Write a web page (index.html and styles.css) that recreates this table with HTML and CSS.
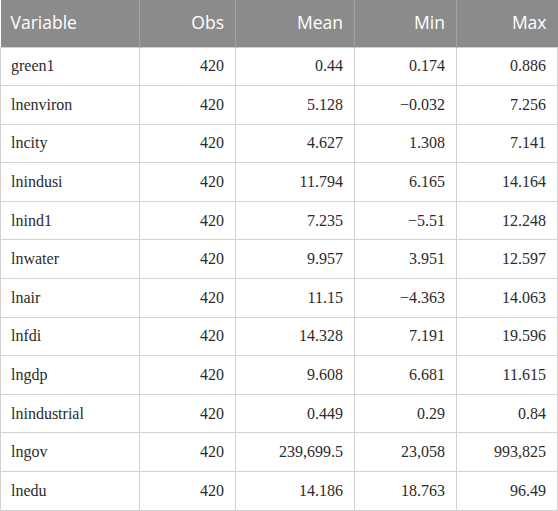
FILE: index.html
```html
<!DOCTYPE html>
<html>
<head>
<meta charset="utf-8">
<link rel="stylesheet" href="styles.css">
</head>
<body>
<table class="stats">
  <colgroup>
    <col class="c1"><col class="c2"><col class="c3"><col class="c4"><col class="c5">
  </colgroup>
  <thead>
    <tr><th class="left">Variable</th><th>Obs</th><th>Mean</th><th>Min</th><th>Max</th></tr>
  </thead>
  <tbody>
    <tr><td class="left">green1</td><td>420</td><td>0.44</td><td>0.174</td><td>0.886</td></tr>
    <tr><td class="left">lnenviron</td><td>420</td><td>5.128</td><td>−0.032</td><td>7.256</td></tr>
    <tr><td class="left">lncity</td><td>420</td><td>4.627</td><td>1.308</td><td>7.141</td></tr>
    <tr><td class="left">lnindusi</td><td>420</td><td>11.794</td><td>6.165</td><td>14.164</td></tr>
    <tr><td class="left">lnind1</td><td>420</td><td>7.235</td><td>−5.51</td><td>12.248</td></tr>
    <tr><td class="left">lnwater</td><td>420</td><td>9.957</td><td>3.951</td><td>12.597</td></tr>
    <tr><td class="left">lnair</td><td>420</td><td>11.15</td><td>−4.363</td><td>14.063</td></tr>
    <tr><td class="left">lnfdi</td><td>420</td><td>14.328</td><td>7.191</td><td>19.596</td></tr>
    <tr><td class="left">lngdp</td><td>420</td><td>9.608</td><td>6.681</td><td>11.615</td></tr>
    <tr><td class="left">lnindustrial</td><td>420</td><td>0.449</td><td>0.29</td><td>0.84</td></tr>
    <tr><td class="left">lngov</td><td>420</td><td>239,699.5</td><td>23,058</td><td>993,825</td></tr>
    <tr><td class="left">lnedu</td><td>420</td><td>14.186</td><td>18.763</td><td>96.49</td></tr>
  </tbody>
</table>
</body>
</html>
```
FILE: styles.css
```css
html, body {
  margin: 0;
  padding: 0;
  background: #ffffff;
}
.stats {
  border-collapse: collapse;
  table-layout: fixed;
  width: 557px;
}
.c1 { width: 139px; }
.c2 { width: 96px; }
.c3 { width: 119px; }
.c4 { width: 102px; }
.c5 { width: 101px; }
.stats th {
  background: #8b8b8b;
  color: #ffffff;
  font-family: "Open Sans", "Noto Sans", sans-serif;
  font-weight: 400;
  font-size: 17.5px;
  height: 47px;
  padding: 0 11px 2px 10px;
  text-align: right;
  border-left: 1px solid #a5a5a5;
  box-sizing: border-box;
}
.stats th:first-child { border-left: none; }
.stats td {
  font-family: "Liberation Serif", "Times New Roman", serif;
  font-size: 16px;
  color: #2b2b2b;
  height: 38.6px;
  padding: 0 11px 0 10px;
  text-align: right;
  border: 1px solid #d2d2d2;
  box-sizing: border-box;
}
.stats .left { text-align: left; }
```
